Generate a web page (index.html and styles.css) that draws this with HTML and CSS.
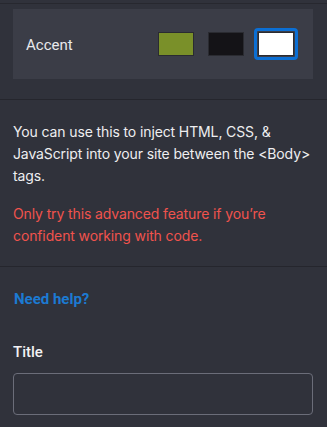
FILE: index.html
```html
<!DOCTYPE html>
<html>
<head>
<meta charset="utf-8">
<link rel="stylesheet" href="styles.css">
</head>
<body>
<div class="page">
  <div class="top-strip"></div>
  <section class="accent-section">
    <div class="accent-panel">
      <span class="accent-label">Accent</span>
      <div class="swatches">
        <span class="swatch swatch-green"></span>
        <span class="swatch swatch-black"></span>
        <span class="swatch swatch-white selected"></span>
      </div>
    </div>
  </section>
  <section class="info-section">
    <p class="info">You can use this to inject HTML, CSS, &amp; JavaScript into your site between the &lt;Body&gt; tags.</p>
    <p class="warning">Only try this advanced feature if you’re confident working with code.</p>
  </section>
  <section class="help-section">
    <a class="help-link" href="#">Need help?</a>
    <label class="field-label">Title</label>
    <div class="field-input"></div>
  </section>
</div>
</body>
</html>
```
FILE: styles.css
```css
* { box-sizing: border-box; }
html, body {
  margin: 0;
  padding: 0;
  background: #30323b;
  font-family: Roboto, "Liberation Sans", sans-serif;
  color: #e9e9ec;
}
.page {
  width: 327px;
  height: 427px;
  overflow: hidden;
}
.top-strip {
  height: 3px;
  border-bottom: 1px solid #27282f;
  box-sizing: content-box;
}
.accent-section {
  padding: 5px 14px 20px 13px;
  border-bottom: 1px solid #25262d;
}
.accent-panel {
  height: 70px;
  background: #3b3d47;
  display: flex;
  align-items: center;
  padding: 0 19px 0 13px;
}
.accent-label {
  font-size: 15px;
  flex: 1;
  padding-top: 1px;
}
.swatches {
  display: flex;
  gap: 14px;
  align-items: center;
}
.swatch {
  display: block;
  width: 36px;
  height: 24px;
  border: 1px solid #2a2b31;
  position: relative;
}
.swatch-green { background: #7a9029; }
.swatch-black { background: #141317; }
.swatch-white { background: #ffffff; }
.swatch.selected::after {
  content: "";
  position: absolute;
  inset: -5px;
  border: 3px solid #0b6fd4;
  border-radius: 4px;
}
.info-section {
  padding: 21px 10px 19px 13px;
  border-bottom: 1px solid #25262d;
}
.info-section p {
  margin: 0;
  font-family: Inter, Roboto, sans-serif;
  font-size: 14px;
  letter-spacing: -0.12px;
  line-height: 22px;
}
.info { color: #eeeef0; }
.warning {
  color: #f0534d;
  margin-top: 16px !important;
}
.help-section {
  padding: 22px 14px 0 13px;
  display: flex;
  flex-direction: column;
}
.help-link {
  color: #1c7ad2;
  font-weight: 700;
  font-size: 15px;
  text-decoration: none;
  line-height: 20px;
  margin-left: 1px;
}
.field-label {
  margin-top: 33px;
  font-size: 15px;
  font-weight: 500;
  line-height: 20px;
  color: #f2f2f4;
}
.field-input {
  margin-top: 11px;
  height: 42px;
  border: 1px solid #6b6d79;
  border-radius: 4px;
}
```
